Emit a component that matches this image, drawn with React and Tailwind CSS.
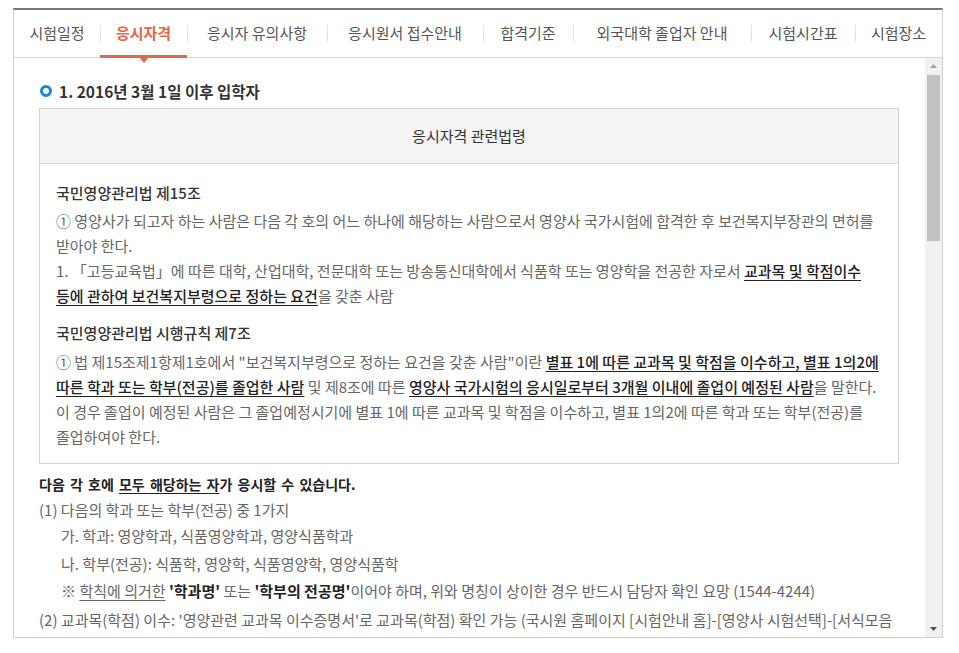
import React from 'react'

// Tab widths are taken from the page so the separators land where they should.
const TABS = [
  { label: '시험일정', w: 'w-[86px]' },
  { label: '응시자격', w: 'w-[87px]', active: true },
  { label: '응시자 유의사항', w: 'w-[140px]' },
  { label: '응시원서 접수안내', w: 'w-[156px]' },
  { label: '합격기준', w: 'w-[90px]' },
  { label: '외국대학 졸업자 안내', w: 'w-[178px]' },
  { label: '시험시간표', w: 'w-[104px]' },
  { label: '시험장소', w: 'w-[87px]' },
]

const U = ({ children, strong = true }) => (
  <span className={`underline underline-offset-[3px] ${strong ? 'font-medium text-[#222]' : ''}`}>{children}</span>
)

const Tab = ({ label, w, active, first }) => (
  <div
    className={`relative ${w} h-full shrink-0 flex items-center justify-center text-[15px] ${
      active ? 'text-[#e2674a] font-bold' : 'text-[#555]'
    } ${first ? '' : 'before:absolute before:left-0 before:top-[15px] before:h-[17px] before:w-px before:bg-[#e2e2e2]'}`}
  >
    {label}
    {active && (
      <>
        <span className="absolute left-0 right-0 bottom-[-1px] h-[3px] bg-[#e2674a]" />
        <span className="absolute left-1/2 -translate-x-1/2 bottom-[-6px] w-0 h-0 border-l-[4px] border-r-[4px] border-t-[5px] border-l-transparent border-r-transparent border-t-[#e2674a]" />
      </>
    )}
  </div>
)

const Scrollbar = () => (
  <div className="w-[17px] shrink-0 h-full bg-[#f1f1f1] flex flex-col items-center">
    <svg width="9" height="17" viewBox="0 0 9 17" className="shrink-0">
      <path d="M1 10 L4.5 6 L8 10 Z" fill="#a3a3a3" />
    </svg>
    <div className="w-[13px] h-[166px] bg-[#c1c1c1]" />
    <div className="flex-1" />
    <svg width="9" height="17" viewBox="0 0 9 17" className="shrink-0">
      <path d="M1 7 L4.5 11 L8 7 Z" fill="#505050" />
    </svg>
  </div>
)

export default function App() {
  return (
    <div className="min-h-screen bg-white pt-[8px] pl-[13px] font-['Noto_Sans_CJK_KR','Noto_Sans',sans-serif]">
      <div className="w-[930px] border-t-2 border-t-[#777] border-x border-b border-[#cfcfcf]">
        {/* tabs */}
        <nav className="flex h-[48px] border-b border-[#d6d6d6]">
          {TABS.map((t, i) => (
            <Tab key={t.label} {...t} first={i === 0} />
          ))}
        </nav>

        <div className="flex h-[579px]">
          <div className="flex-1 min-w-0 overflow-hidden pt-[21px] pl-[25px] pr-[26px] text-[15px] text-[#666] break-keep">
            <h3 className="flex items-center gap-[7px] leading-[24px] text-[15.5px] font-bold text-[#333] mb-[5px]">
              <span className="w-[12px] h-[12px] rounded-full border-[3px] border-[#1f86d6] ml-px" />
              1. 2016년 3월 1일 이후 입학자
            </h3>

            <div className="border border-[#d4d4d4]">
              <div className="h-[55px] flex items-center justify-center bg-[#f4f4f4] border-b border-[#d8d8d8] text-[#333]">
                응시자격 관련법령
              </div>
              <div className="px-[16px] pt-[16px] pb-[14px] leading-[25px]">
                <p className="font-medium text-[#333] mb-[3px]">국민영양관리법 제15조</p>
                <p>
                  ① 영양사가 되고자 하는 사람은 다음 각 호의 어느 하나에 해당하는 사람으로서 영양사 국가시험에 합격한 후
                  보건복지부장관의 면허를 받아야 한다.
                </p>
                <p>
                  1. 「고등교육법」에 따른 대학, 산업대학, 전문대학 또는 방송통신대학에서 식품학 또는 영양학을 전공한 자로서{' '}
                  <U>교과목 및 학점이수 등에 관하여 보건복지부령으로 정하는 요건</U>을 갖춘 사람
                </p>

                <p className="font-medium text-[#333] mt-[12px] mb-[4px]">국민영양관리법 시행규칙 제7조</p>
                <p>
                  ① 법 제15조제1항제1호에서 "보건복지부령으로 정하는 요건을 갖춘 사람"이란{' '}
                  <U>별표 1에 따른 교과목 및 학점을 이수하고, 별표 1의2에 따른 학과 또는 학부(전공)를 졸업한 사람</U> 및
                  제8조에 따른 <U>영양사 국가시험의 응시일로부터 3개월 이내에 졸업이 예정된 사람</U>을 말한다.
                </p>
                <p>
                  이 경우 졸업이 예정된 사람은 그 졸업예정시기에 별표 1에 따른 교과목 및 학점을 이수하고, 별표 1의2에 따른
                  학과 또는 학부(전공)를 졸업하여야 한다.
                </p>
              </div>
            </div>

            <div className="mt-[7px] leading-[26px]">
              <p className="font-bold text-[#222] text-[14px] [word-spacing:2px]">
                다음 각 호에 <span className="underline underline-offset-[3px]">모두 해당하는 자</span>가 응시할 수
                있습니다.
              </p>
              <p>(1) 다음의 학과 또는 학부(전공) 중 1가지</p>
              <p className="pl-[22px]">가. 학과: 영양학과, 식품영양학과, 영양식품학과</p>
              <p className="pl-[22px] mt-[2px]">나. 학부(전공): 식품학, 영양학, 식품영양학, 영양식품학</p>
              <p className="pl-[22px] mt-[1px]">
                ※ <U strong={false}>학칙에 의거한</U> <b className="text-[#222]">'학과명'</b> 또는{' '}
                <b className="text-[#222]">'학부의 전공명'</b>이어야 하며, 위와 명칭이 상이한 경우 반드시 담당자 확인 요망
                (1544-4244)
              </p>
              <p className="pl-[22px] -indent-[22px] mt-[3px]">
                (2) 교과목(학점) 이수: '영양관련 교과목 이수증명서'로 교과목(학점) 확인 가능 (국시원 홈페이지 [시험안내
                홈]-[영양사 시험선택]-[서식모음 집] 첨부파일 참조)
              </p>
            </div>
          </div>
          <Scrollbar />
        </div>
      </div>
    </div>
  )
}
